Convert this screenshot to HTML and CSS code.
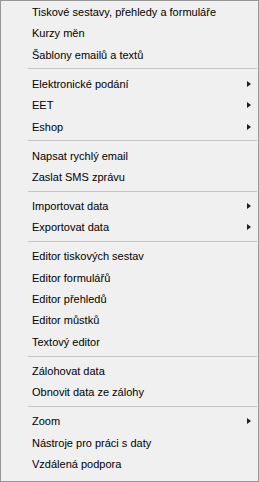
FILE: index.html
```html
<!DOCTYPE html>
<html lang="cs">
<head>
    <meta charset="UTF-8">
    <title>Menu</title>
    <link rel="stylesheet" href="styles.css">
</head>
<body>
    <div class="menu">
        <div class="menu-item">Tiskové sestavy, přehledy a formuláře</div>
        <div class="menu-item">Kurzy měn</div>
        <div class="menu-item">Šablony emailů a textů</div>
        <div class="menu-separator"></div>
        <div class="menu-item has-sub">Elektronické podání</div>
        <div class="menu-item has-sub">EET</div>
        <div class="menu-item has-sub">Eshop</div>
        <div class="menu-separator"></div>
        <div class="menu-item">Napsat rychlý email</div>
        <div class="menu-item">Zaslat SMS zprávu</div>
        <div class="menu-separator"></div>
        <div class="menu-item has-sub">Importovat data</div>
        <div class="menu-item has-sub">Exportovat data</div>
        <div class="menu-separator"></div>
        <div class="menu-item">Editor tiskových sestav</div>
        <div class="menu-item">Editor formulářů</div>
        <div class="menu-item">Editor přehledů</div>
        <div class="menu-item">Editor můstků</div>
        <div class="menu-item">Textový editor</div>
        <div class="menu-separator"></div>
        <div class="menu-item">Zálohovat data</div>
        <div class="menu-item">Obnovit data ze zálohy</div>
        <div class="menu-separator"></div>
        <div class="menu-item has-sub">Zoom</div>
        <div class="menu-item">Nástroje pro práci s daty</div>
        <div class="menu-item">Vzdálená podpora</div>
    </div>
</body>
</html>
```

FILE: styles.css
```css
body {
    margin: 0;
    padding: 0;
    font-family: 'Liberation Sans', Arial, sans-serif;
    background-color: #f0f0f0;
}

/* Popup menu */
.menu {
    height: 482px;
    box-sizing: border-box;
    border: 1px solid #979797;
    background-color: #f0f0f0;
    padding: 1px 1px 0 1px;
    display: flex;
    flex-direction: column;
}

.menu-item {
    position: relative;
    height: 21.4px;
    line-height: 21.4px;
    padding-left: 30px;
    font-size: 11px;
    color: #000000;
    white-space: nowrap;
    flex: 0 0 auto;
}

/* submenu arrow */
.menu-item.has-sub::after {
    content: '';
    position: absolute;
    right: 6px;
    top: 7px;
    width: 0;
    height: 0;
    border-top: 3.5px solid transparent;
    border-bottom: 3.5px solid transparent;
    border-left: 4px solid #1e1e1e;
}

.menu-separator {
    height: 7.6px;
    box-sizing: border-box;
    padding-top: 2.3px;
    margin-left: 26px;
    flex: 0 0 auto;
}

.menu-separator::before {
    content: '';
    display: block;
    height: 1px;
    background-color: #c5c5c5;
}
```
